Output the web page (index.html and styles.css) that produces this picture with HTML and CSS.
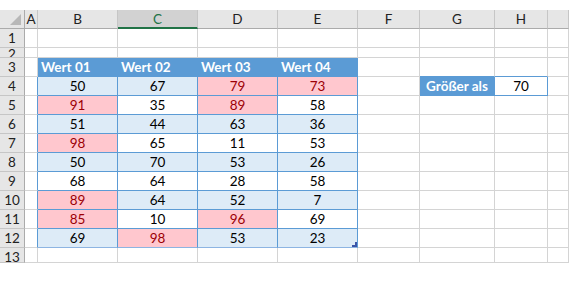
FILE: index.html
```html
<!DOCTYPE html>
<html lang="de">
<head>
<meta charset="utf-8">
<title>Bedingte Formatierung</title>
<link rel="stylesheet" href="styles.css">
</head>
<body>
<div class="sheet">
  <!-- column headers -->
  <div class="corner"><span class="tri"></span></div>
  <div class="ch">A</div>
  <div class="ch">B</div>
  <div class="ch sel">C</div>
  <div class="ch">D</div>
  <div class="ch">E</div>
  <div class="ch">F</div>
  <div class="ch">G</div>
  <div class="ch">H</div>
  <div class="ch"></div>

  <!-- row 1 -->
  <div class="rh">1</div>
  <div class="c"></div><div class="c"></div><div class="c"></div><div class="c"></div><div class="c"></div><div class="c"></div><div class="c"></div><div class="c"></div><div class="c"></div>

  <!-- row 2 -->
  <div class="rh short"><span>2</span></div>
  <div class="c"></div><div class="c"></div><div class="c"></div><div class="c"></div><div class="c"></div><div class="c"></div><div class="c"></div><div class="c"></div><div class="c"></div>

  <!-- row 3 -->
  <div class="rh">3</div>
  <div class="c"></div>
  <div class="c th">Wert 01</div>
  <div class="c th">Wert 02</div>
  <div class="c th">Wert 03</div>
  <div class="c th">Wert 04</div>
  <div class="c"></div>
  <div class="c above"></div>
  <div class="c above"></div>
  <div class="c"></div>

  <!-- row 4 -->
  <div class="rh">4</div>
  <div class="c tl"></div>
  <div class="c d b">50</div><div class="c d b">67</div><div class="c d hi">79</div><div class="c d hi">73</div>
  <div class="c"></div>
  <div class="c lbl">Größer als</div>
  <div class="c val">70</div>
  <div class="c"></div>

  <!-- row 5 -->
  <div class="rh">5</div>
  <div class="c tl"></div>
  <div class="c d hi">91</div><div class="c d">35</div><div class="c d hi">89</div><div class="c d">58</div>
  <div class="c"></div><div class="c"></div><div class="c"></div><div class="c"></div>

  <!-- row 6 -->
  <div class="rh">6</div>
  <div class="c tl"></div>
  <div class="c d b">51</div><div class="c d b">44</div><div class="c d b">63</div><div class="c d b">36</div>
  <div class="c"></div><div class="c"></div><div class="c"></div><div class="c"></div>

  <!-- row 7 -->
  <div class="rh">7</div>
  <div class="c tl"></div>
  <div class="c d hi">98</div><div class="c d">65</div><div class="c d">11</div><div class="c d">53</div>
  <div class="c"></div><div class="c"></div><div class="c"></div><div class="c"></div>

  <!-- row 8 -->
  <div class="rh">8</div>
  <div class="c tl"></div>
  <div class="c d b">50</div><div class="c d b">70</div><div class="c d b">53</div><div class="c d b">26</div>
  <div class="c"></div><div class="c"></div><div class="c"></div><div class="c"></div>

  <!-- row 9 -->
  <div class="rh">9</div>
  <div class="c tl"></div>
  <div class="c d">68</div><div class="c d">64</div><div class="c d">28</div><div class="c d">58</div>
  <div class="c"></div><div class="c"></div><div class="c"></div><div class="c"></div>

  <!-- row 10 -->
  <div class="rh">10</div>
  <div class="c tl"></div>
  <div class="c d hi">89</div><div class="c d b">64</div><div class="c d b">52</div><div class="c d b">7</div>
  <div class="c"></div><div class="c"></div><div class="c"></div><div class="c"></div>

  <!-- row 11 -->
  <div class="rh">11</div>
  <div class="c tl"></div>
  <div class="c d hi">85</div><div class="c d">10</div><div class="c d hi">96</div><div class="c d">69</div>
  <div class="c"></div><div class="c"></div><div class="c"></div><div class="c"></div>

  <!-- row 12 -->
  <div class="rh">12</div>
  <div class="c tl"></div>
  <div class="c d b last">69</div><div class="c d hi last">98</div><div class="c d b last">53</div><div class="c d b last corner-cell">23<span class="handle"></span></div>
  <div class="c"></div><div class="c"></div><div class="c"></div><div class="c"></div>

  <!-- row 13 -->
  <div class="rh short13"><span>13</span></div>
  <div class="c"></div><div class="c"></div><div class="c"></div><div class="c"></div><div class="c"></div><div class="c"></div><div class="c"></div><div class="c"></div><div class="c"></div>
</div>
</body>
</html>
```

FILE: styles.css
```css
* { box-sizing: border-box; }

html, body {
  margin: 0;
  padding: 0;
  background: #ffffff;
}

body {
  padding-top: 10px;
  font-family: Lato, "Liberation Sans", sans-serif;
  font-size: 13.5px;
  color: #000;
}

.sheet {
  display: grid;
  grid-template-columns: 25px 13px 80px 80px 80px 80px 62px 75px 53px 21px;
  grid-template-rows: 19px 19px 10px 19px 19px 19px 19px 19px 19px 19px 19px 19px 19px 15px;
  width: 569px;
}

.sheet > div {
  overflow: hidden;
  display: flex;
  align-items: center;
  justify-content: center;
  line-height: 19px;
  white-space: nowrap;
}

.corner {
  background: #e6e6e6;
  border-right: 1px solid #ababab;
  border-bottom: 1px solid #ababab;
  position: relative;
}

.tri {
  position: absolute;
  right: 3px;
  bottom: 3px;
  width: 11px;
  height: 11px;
  background: #b8b8b8;
  clip-path: polygon(100% 0, 100% 100%, 0 100%);
}

.ch {
  background: #e6e6e6;
  border-right: 1px solid #c6c6c6;
  border-bottom: 1px solid #ababab;
  color: #222;
  padding-top: 1px;
}

.ch.sel {
  background: #d2d2d2;
  color: #217346;
  border-bottom: 2px solid #217346;
}

.rh {
  background: #e6e6e6;
  border-right: 1px solid #ababab;
  border-bottom: 1px solid #c6c6c6;
  color: #222;
}

.sheet > .rh.short,
.sheet > .rh.short13 {
  align-items: flex-start;
}

.rh.short span {
  margin-top: -3px;
}

.rh.short13 span {
  margin-top: 0;
}

.c {
  border-right: 1px solid #d4d4d4;
  border-bottom: 1px solid #d4d4d4;
}

.th {
  background: #5b9bd5;
  border-right-color: #5b9bd5;
  border-bottom-color: #5b9bd5;
  color: #fff;
  font-weight: 700;
}

.sheet > .th {
  justify-content: flex-start;
  padding-left: 3px;
}

.above {
  border-bottom-color: #5b9bd5;
}

.tl {
  border-right-color: #5b9bd5;
}

.d {
  border-right-color: #5b9bd5;
  border-bottom-color: #5b9bd5;
  padding-top: 1px;
}

.d.b {
  background: #ddebf7;
}

.d.hi {
  background: #ffc7ce;
  color: #9c0006;
}

.d.last {
  border-bottom-color: #8db4e2;
}

.corner-cell {
  position: relative;
}

.handle {
  position: absolute;
  right: 0;
  bottom: 0;
  width: 5px;
  height: 5px;
  background: #3c55a8;
  clip-path: polygon(100% 0, 100% 100%, 0 100%, 0 60%, 60% 60%, 60% 0);
}

.lbl {
  background: #5b9bd5;
  border-right-color: #5b9bd5;
  border-bottom-color: #5b9bd5;
  color: #fff;
  font-weight: 700;
}

.val {
  border-right-color: #5b9bd5;
  border-bottom-color: #5b9bd5;
  padding-top: 1px;
}
```
